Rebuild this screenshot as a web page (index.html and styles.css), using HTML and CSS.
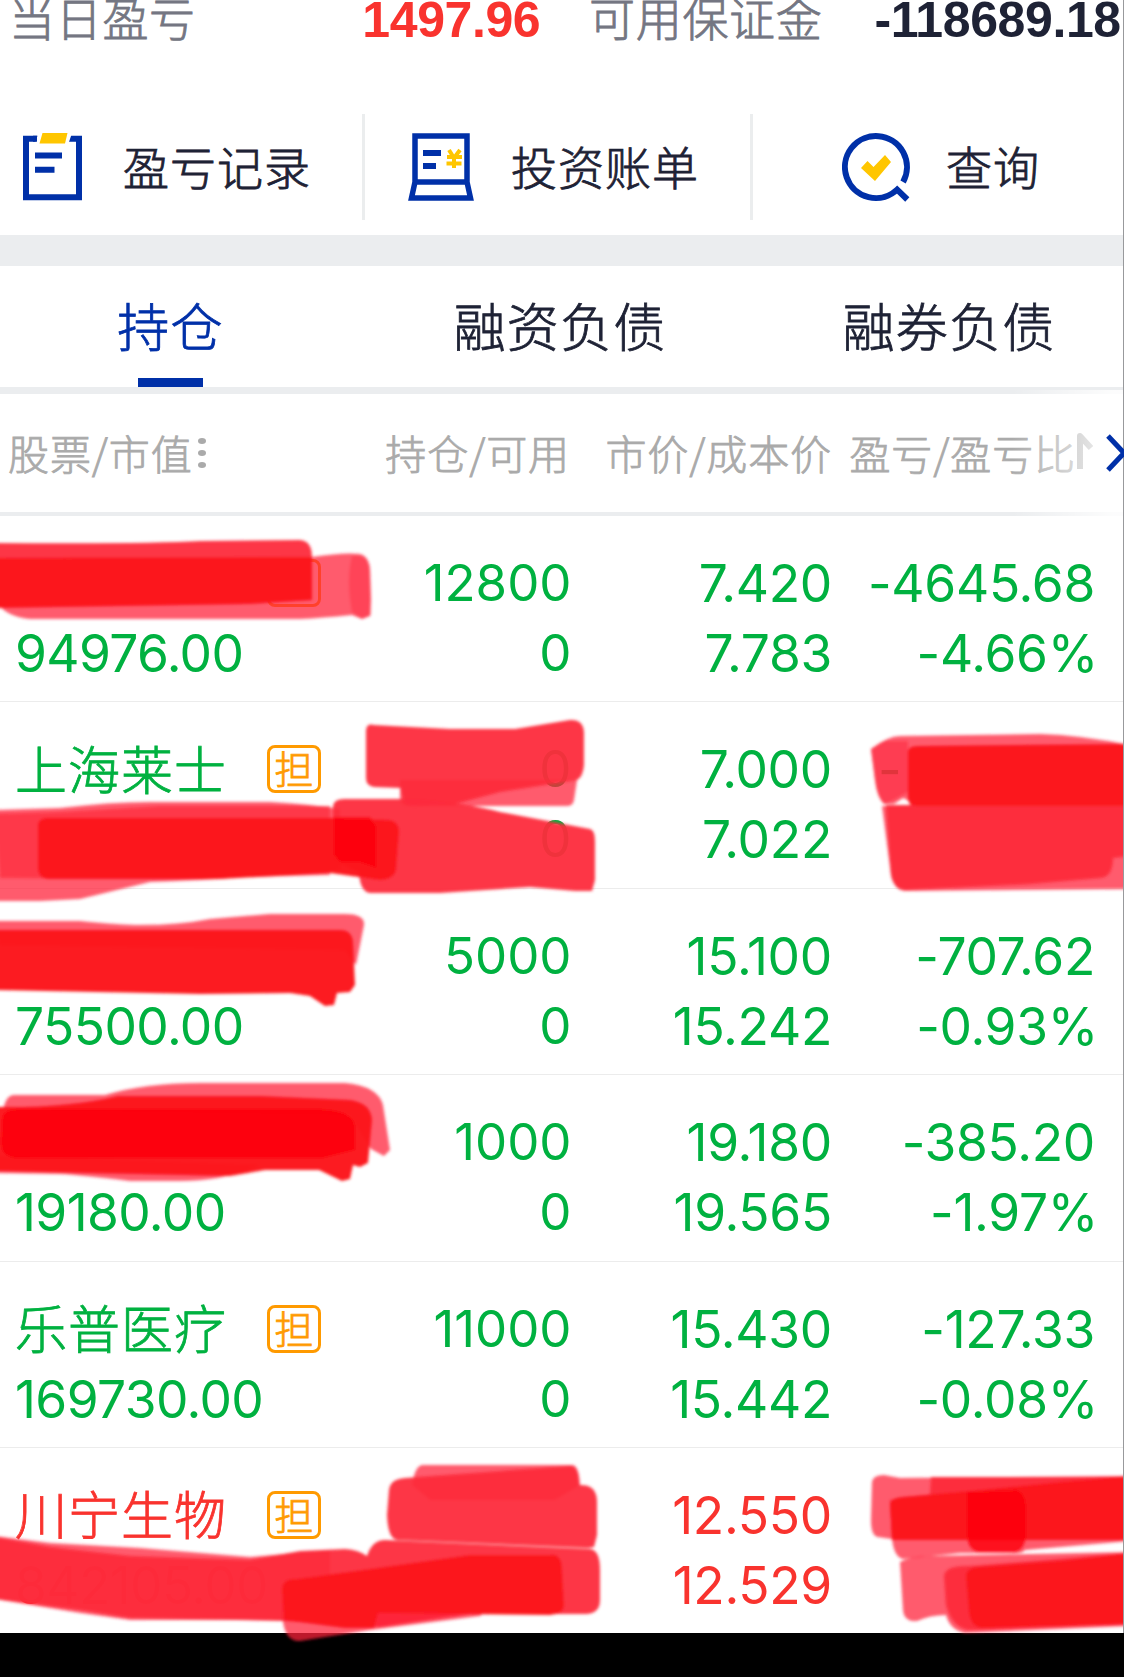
FILE: index.html
```html
<!DOCTYPE html>
<html lang="zh-CN">
<head>
<meta charset="utf-8">
<title>融资融券持仓</title>
<link rel="stylesheet" href="styles.css">
</head>
<body>
<div class="screen">
  <header class="summary">
    <span class="summary-label">当日盈亏</span>
    <b class="summary-value up">1497.96</b>
    <span class="summary-label second">可用保证金</span>
    <b class="summary-value last">-118689.18</b>
  </header>

  <nav class="actions">
    <a class="action action-record">
      <svg class="icon" width="60" height="68" viewBox="0 0 60 68"><path d="M14 5.700H3V64.300H56V5.700H46" fill="none" stroke="#0030a8" stroke-width="6"/><path d="M12.500 8.700L14.500 2.700H10V8.700Z M45.500 8.700L47.500 2.700H44.500Z" fill="#0030a8"/><path d="M44 0H49L46 9H43Z" fill="#fff"/><path d="M19.500 0H44.500L42 10.500H16.500Z" fill="#ffc600"/><path d="M12 22.500H39M12 36.700H31.500" stroke="#0030a8" stroke-width="6"/></svg>
      <span>盈亏记录</span>
    </a>
    <a class="action action-bill">
      <svg class="icon" width="66" height="68" viewBox="0 0 66 68"><path d="M7 49V3H59V49M7 49H59M7 49L3.500 65H62.500L59 49" fill="none" stroke="#0030a8" stroke-width="5.500"/><path d="M15 20H33M15 33H28" stroke="#0030a8" stroke-width="6"/><path d="M41 17L46 25L52 17M39 24H54M38.500 30.500H53.500M46 24V35" fill="none" stroke="#ffc600" stroke-width="4"/></svg>
      <span>投资账单</span>
    </a>
    <a class="action action-query">
      <svg class="icon" width="69" height="69" viewBox="0 0 69 69"><path d="M65.300 66.500L55.140 56.670A31 31 0 1 1 61.100 49" fill="none" stroke="#0030a8" stroke-width="6"/><path d="M19 35L25.500 28L31.500 34L43 22L49 29L33 48Z" fill="#ffc600"/></svg>
      <span>查询</span>
    </a>
  </nav>

  <nav class="tabs">
    <a class="tab active">持仓</a>
    <a class="tab">融资负债</a>
    <a class="tab">融券负债</a>
  </nav>

  <div class="columns head">
    <div class="head-first">股票/市值<svg width="10" height="32" viewBox="0 0 10 32"><g fill="#aaa"><ellipse cx="5" cy="4" rx="4" ry="3"/><ellipse cx="5" cy="16" rx="4" ry="3"/><ellipse cx="5" cy="28" rx="4" ry="3"/></g></svg></div>
    <div>持仓/可用</div>
    <div>市价/成本价</div>
    <div class="head-last">盈亏/盈亏比<svg width="18" height="38" viewBox="0 0 18 38"><path d="M4 36V3L15 15" fill="none" stroke="#aaa" stroke-width="6" stroke-linejoin="round"/></svg></div>
    <div class="head-more"><svg width="18" height="38" viewBox="0 0 18 38"><path d="M2 2L18 19L2 36" fill="none" stroke="#0030a8" stroke-width="5"/></svg></div>
  </div>

  <main class="list">
    <section class="columns row">
      <div class="stock"><p class="name"><i class="badge">&nbsp;</i></p><p class="market">94976.00</p></div>
      <div class="qty"><p>12800</p><p>0</p></div>
      <div><p>7.420</p><p>7.783</p></div>
      <div class="profit"><p>-4645.68</p><p class="rate">-4.66%</p></div>
    </section>
    <section class="columns row">
      <div class="stock"><p class="name"><span>上海莱士</span><i class="badge">担</i></p><p class="market">&nbsp;</p></div>
      <div class="qty"><p>0</p><p>0</p></div>
      <div><p>7.000</p><p>7.022</p></div>
      <div class="masked"><p>-</p></div>
    </section>
    <section class="columns row">
      <div class="stock"><p class="name"></p><p class="market">75500.00</p></div>
      <div class="qty"><p>5000</p><p>0</p></div>
      <div><p>15.100</p><p>15.242</p></div>
      <div class="profit"><p>-707.62</p><p class="rate">-0.93%</p></div>
    </section>
    <section class="columns row">
      <div class="stock"><p class="name"></p><p class="market">19180.00</p></div>
      <div class="qty"><p>1000</p><p>0</p></div>
      <div><p>19.180</p><p>19.565</p></div>
      <div class="profit"><p>-385.20</p><p class="rate">-1.97%</p></div>
    </section>
    <section class="columns row">
      <div class="stock"><p class="name"><span>乐普医疗</span><i class="badge">担</i></p><p class="market">169730.00</p></div>
      <div class="qty"><p>11000</p><p>0</p></div>
      <div><p>15.430</p><p>15.442</p></div>
      <div class="profit"><p>-127.33</p><p class="rate">-0.08%</p></div>
    </section>
    <section class="columns row up">
      <div class="stock"><p class="name"><span>川宁生物</span><i class="badge">担</i></p><p class="market">842105.00</p></div>
      <div class="qty"></div>
      <div><p>12.550</p><p>12.529</p></div>
      <div></div>
    </section>
  </main>
  <footer class="bottom"></footer>

  <!-- marker strokes over private figures -->
  <svg class="marker" width="1124" height="1677" viewBox="0 0 1124 1677">
    <defs><filter id="soft" x="-5%" y="-5%" width="110%" height="110%"><feGaussianBlur stdDeviation="1.6"/></filter></defs>
    <g filter="url(#soft)">
      <path class="light" d="M-5 560L312 557Q345 552 360 554Q369 556 370 570L371 600L370 616L362 619L352 615Q320 618 300 619H30Q5 617 -5 600Z"/>
      <path class="light" d="M352 556Q369 554 370 570L371 615L362 619L352 612Q346 580 352 556Z" opacity=".5"/>
      <path class="mid" d="M-5 543Q150 544 200 541L300 540Q312 541 312 557V600L-5 606Z"/>
      <path class="dark" d="M-5 558L312 557V600L250 604L-5 608Z"/>

      <path class="light" d="M400 780H577L574 800Q573 806 567 806H410Q400 806 400 798Z"/>
      <path class="mid" d="M366 730Q367 723 374 725L450 729H515L570 720Q583 719 584 732V765Q583 777 577 780L500 792L455 804L412 806Q402 806 401 788L374 787Q366 786 366 778Z"/>

      <path class="light" d="M-5 810L60 808Q110 802 150 802H270Q310 804 340 809V870Q270 873 220 879Q180 881 150 882L80 899L40 901H-5Z"/>
      <path class="mid" d="M-5 814L60 812L160 806H330V875L170 879L0 878Z" opacity=".75"/>
      <path class="mid" d="M333 806Q334 799 344 799H420Q470 804 500 812L590 829Q595 830 595 842V880L592 891L575 891L530 887L440 893H370Q360 892 359 872L333 860Z"/>
      <path class="dark" d="M38 826Q38 817 50 818H333L390 820Q399 822 399 832L396 870Q394 879 380 880L330 873L220 879H48Q38 878 38 868Z"/>
      <path class="deep" d="M334 817H370L376 826V868L359 862H340L334 855Z"/>

      <path class="light" d="M871 749Q888 736 900 736L1040 734Q1080 735 1130 745V806H910Q910 800 903 798L894 804L884 804Q877 797 875 780Z"/>
      <path class="mid" d="M871 749L884 741H908V792L890 802L884 804Q877 797 875 780Z" opacity=".6"/>
      <path class="light" d="M882 806H1130V889L905 891Q894 890 891 875Z"/>
      <path class="mid" d="M886 805H1130V856L1113 858Q1113 877 1100 878L1030 884L905 890Q894 889 891 875Z"/>
      <path class="dark" d="M908 752Q908 746 918 746L1130 744V806H918Q908 806 908 797Z"/>

      <path class="light" d="M-5 921H80Q120 925 140 925Q180 925 210 919L270 914H345Q365 914 364 925L356 965L345 950L0 945Z"/>
      <path class="dark" d="M-5 930L340 930Q352 930 353 942L355 985L350 992L337 993L334 1005L325 1006L310 996L290 993L200 994L-5 990Z"/>

      <path class="light" d="M3 1110Q6 1095 14 1095H105Q145 1083 200 1083H345Q378 1086 383 1105L390 1150L384 1156L371 1149L350 1115Z"/>
      <path class="light" d="M-5 1155L260 1165Q225 1181 180 1181H130Q80 1175 60 1174L-5 1173Z"/>
      <path class="dark" d="M-5 1107Q70 1108 118 1096H260L350 1100Q371 1103 372 1120L368 1163L360 1167L353 1165L350 1179L342 1181L319 1170H265L230 1176L-5 1171Z"/>
      <path class="deep" d="M2 1120Q2 1109 18 1109H320Q352 1110 355 1125V1150L323 1158H15Q0 1157 1 1140Z"/>

      <path class="light" d="M412 1485Q415 1465 423 1465H572Q579 1465 580 1485L555 1500H430Z"/>
      <path class="mid" d="M389 1490Q390 1479 405 1478L570 1466Q579 1466 579 1485Q597 1484 597 1502V1535L594 1547L588 1548L398 1540Q388 1540 387 1515Z"/>
      <path class="light" d="M-5 1536L50 1543L140 1548L250 1557L330 1550V1620H130L80 1613L-5 1599Z"/>
      <path class="mid" d="M-5 1537L50 1547L130 1556L250 1560L300 1551L345 1549Q359 1550 367 1556Q372 1540 385 1540L590 1549Q600 1550 600 1570V1600Q600 1613 587 1614H470L380 1627L284 1621L130 1618L80 1610L-5 1599Z"/>
      <path class="light" d="M282 1600H500L480 1616L370 1630L300 1641Q286 1642 283 1622Z"/>
      <path class="dark" d="M282 1590Q282 1578 297 1579L370 1569L470 1555H550Q562 1553 562 1570L564 1606Q563 1614 550 1615L378 1613L374 1628H345L284 1620Z"/>

      <path class="light" d="M872 1482Q873 1475 884 1475L900 1478L1130 1476V1541L1025 1550Q1022 1554 1010 1553L960 1553L903 1559Q894 1557 892 1539L878 1537Q871 1536 871 1520Z"/>
      <path class="mid" d="M931 1477H1130V1540H892L890 1500L930 1495Z"/>
      <path class="dark" d="M890 1505Q890 1498 902 1497L970 1491L1060 1482L1130 1476V1540H892Z"/>
      <path class="deep" d="M967 1492L1017 1490Q1025 1493 1026 1505V1537Q1024 1550 1016 1552H978Q968 1550 967 1536Z"/>
      <path class="light" d="M900 1562Q910 1556 930 1556L1130 1552V1626L965 1633Q950 1630 946 1615Q930 1615 917 1621Q904 1622 903 1610Z"/>
      <path class="mid" d="M944 1576Q945 1565 970 1566L1130 1553V1624L970 1630Q952 1628 946 1605Z"/>
      <path class="dark" d="M966 1578Q965 1568 978 1567L1060 1561L1130 1553V1624L985 1628Q971 1629 969 1612Z"/>
    </g>
  </svg>
  <div class="edge"></div>
</div>
</body>
</html>
```
FILE: styles.css
```css
* { box-sizing: border-box; }
body { margin: 0; background: #fff; }
p { margin: 0; }

.screen {
  position: relative;
  width: 1124px;
  height: 1677px;
  overflow: hidden;
  display: flex;
  flex-direction: column;
  font-family: Inter, "Noto Sans CJK SC", sans-serif;
  color: #1e2235;
}

/* the light CJK weight is thickened slightly */
.summary-label, .action, .tab, .head, .name { -webkit-text-stroke: 0.8px currentColor; }

.summary {
  height: 114px;
  display: flex;
  align-items: flex-start;
  padding-left: 9px;
  white-space: nowrap;
}
.summary-label {
  width: 354px;
  margin-top: -19px;
  font: 300 46px/70px "Noto Sans CJK SC", sans-serif;
  letter-spacing: 0.7px;
  color: #747682;
}
.summary-label.second { width: 286px; margin-left: 47px; }
.summary-value {
  width: 180px;
  margin-top: -8px;
  font: bold 50px/56px "Liberation Sans", sans-serif;
  letter-spacing: -0.4px;
}
.summary-value.last { width: 250px; }
.up { color: #f9332e; }

.actions {
  height: 152px;
  border-bottom: 31px solid #ebedef;
  display: flex;
}
.action {
  height: 106px;
  display: flex;
  align-items: flex-start;
  padding-top: 19px;
  font: 300 46px/70px "Noto Sans CJK SC", sans-serif;
  letter-spacing: 1px;
  white-space: nowrap;
}
.action .icon { flex: none; }
.action span { margin-top: -3px; }
.action-record { width: 365px; padding-left: 23px; border-right: 3px solid #ebedee; }
.action-record span { margin-left: 40px; }
.action-bill { width: 388px; padding-left: 43px; border-right: 3px solid #ebedee; }
.action-bill span { margin-left: 37px; }
.action-query { padding-left: 89px; }
.action-query span { margin-left: 35px; }

.tabs {
  height: 128px;
  border-bottom: 7px solid #ebedef;
  display: grid;
  grid-template-columns: 341px 438px 1fr;
  text-align: center;
}
.tab {
  display: flex;
  flex-direction: column;
  align-items: center;
  justify-content: space-between;
  padding-top: 20px;
  font: 300 52px/78px "Noto Sans CJK SC", sans-serif;
  letter-spacing: 1.3px;
}
.tab:last-child { padding-right: 5px; }
.tab.active { color: #0030a8; }
.tab.active::after { content: ""; width: 65px; height: 9px; background: #0030a8; }

.columns {
  display: grid;
  grid-template-columns: 330px 240px 262px 262px 30px;
  text-align: right;
}
.head {
  position: relative;
  height: 122px;
  border-bottom: 4px solid #ebedef;
  align-items: center;
  font: 300 41px/60px "Noto Sans CJK SC", sans-serif;
  letter-spacing: 0.9px;
  color: #aaa;
  white-space: nowrap;
}
/* fade at the scrollable edge */
.head::after {
  content: "";
  position: absolute;
  right: 0;
  top: -4px;
  bottom: -4px;
  width: 112px;
  background: linear-gradient(90deg, rgba(255,255,255,0), rgba(255,255,255,.85) 90%);
}
.head > div { display: flex; align-items: center; justify-content: flex-end; padding-bottom: 3px; }
.head > .head-first { justify-content: flex-start; padding-left: 8px; }
.head-first svg { margin-left: 4px; position: relative; top: 1px; }
.head > .head-more { position: relative; z-index: 1; padding-bottom: 0; }

.list { height: 1117px; color: #00b140; }
.row {
  height: 186.400px;
  padding-top: 32px;
  border-bottom: 1.500px solid #ececec;
  font-size: 51.500px;
  line-height: 70px;
  letter-spacing: -0.3px;
}
.row:last-child { border-bottom: 0; }
.row.up { color: #f9332e; }
.stock { text-align: left; padding-left: 15px; }
.market { letter-spacing: -0.6px; }
.qty { font-size: 51px; letter-spacing: 0; margin-right: -1.5px; }
.profit { margin-right: -1px; }
.rate { margin-right: -3px; }
.name {
  height: 70px;
  display: flex;
  align-items: center;
  font: 300 52px/70px "Noto Sans CJK SC", sans-serif;
  letter-spacing: 1px;
}
.name span { margin-top: -3px; }
.badge {
  width: 54px;
  height: 48px;
  margin-left: auto;
  margin-right: 9px;
  border: 3px solid #ff9a00;
  border-radius: 8px;
  color: #ff9a00;
  font: 300 39px/39px "Noto Sans CJK SC", sans-serif;
  letter-spacing: 0;
  text-align: center;
}
.masked { text-align: left; padding-left: 46px; }

.bottom { flex: 1; background: #000; }

.marker { position: absolute; left: 0; top: 0; }
.light { fill: #ff2038; fill-opacity: .74; }
.mid { fill: #fd2b3c; fill-opacity: .95; }
.dark { fill: #fc131c; fill-opacity: .98; }
.deep { fill: #fd0008; fill-opacity: .75; }
.edge { position: absolute; right: 0; top: 0; width: 1px; height: 1633px; background: #98999c; }
```
